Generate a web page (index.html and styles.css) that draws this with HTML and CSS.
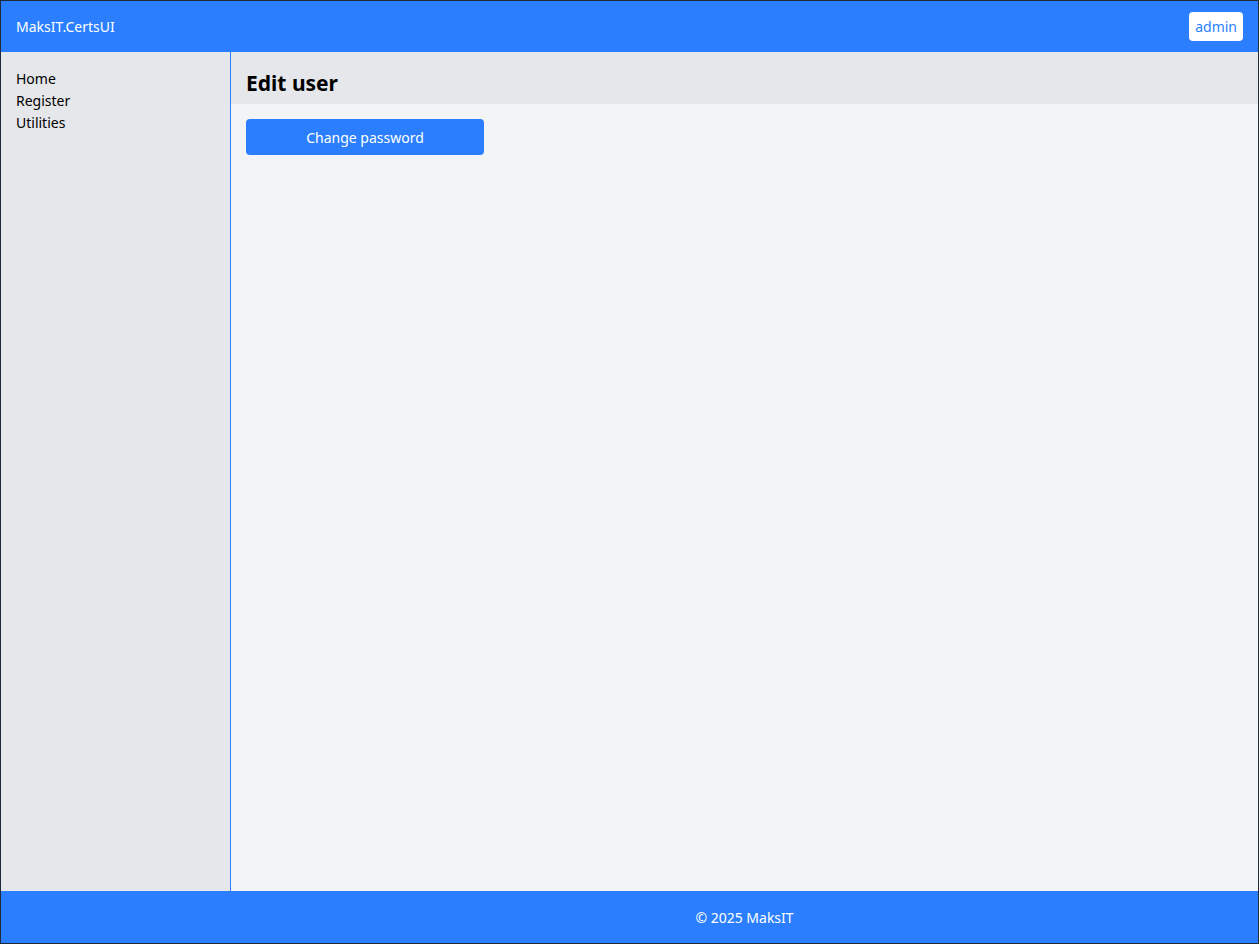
FILE: index.html
```html
<!DOCTYPE html>
<html>
  <head>
    <meta charset="utf-8">
    <title>MaksIT.CertsUI</title>
    <link rel="stylesheet" href="styles.css">
  </head>
  <body>
    <div class="app">
      <header class="topbar">
        <span class="brand">MaksIT.CertsUI</span>
        <button class="user-button">admin</button>
      </header>
      <div class="layout">
        <nav class="sidebar">
          <a href="#">Home</a>
          <a href="#">Register</a>
          <a href="#">Utilities</a>
        </nav>
        <main class="content">
          <div class="page-header">
            <h1>Edit user</h1>
          </div>
          <div class="page-body">
            <button class="button">Change password</button>
          </div>
        </main>
      </div>
      <footer class="footer">&copy; 2025 MaksIT</footer>
    </div>
  </body>
</html>
```

FILE: styles.css
```css
/* Base */
html, body {
  margin: 0;
  height: 100%;
}
body {
  font-family: "Noto Sans", "Open Sans", sans-serif;
  font-size: 14px;
  color: #000000;
}
.app {
  box-sizing: border-box;
  height: 100vh;
  border: 1px solid #1e2939;
  display: flex;
  flex-direction: column;
}
/* Top bar */
.topbar {
  height: 51px;
  flex-shrink: 0;
  background-color: #2b7fff;
  color: white;
  display: flex;
  align-items: center;
  justify-content: space-between;
  padding: 0 15px;
}
.user-button {
  font-family: inherit;
  font-size: 14px;
  background-color: white;
  color: #2b7fff;
  border: none;
  border-radius: 4px;
  height: 29px;
  padding: 0 6px;
  cursor: pointer;
}
/* Sidebar + content */
.layout {
  flex: 1;
  display: flex;
  min-height: 0;
}
.sidebar {
  width: 214px;
  flex-shrink: 0;
  background-color: #e5e7eb;
  border-right: 1px solid #2b7fff;
  padding: 16px 0 0 15px;
  display: flex;
  flex-direction: column;
}
.sidebar a {
  color: #000000;
  text-decoration: none;
  line-height: 22px;
}
.content {
  flex: 1;
  background-color: #f3f4f6;
  display: flex;
  flex-direction: column;
}
.page-header {
  background-color: #e5e7eb;
  height: 52px;
  box-sizing: border-box;
  display: flex;
  align-items: center;
  padding: 10px 15px 0;
}
.page-header h1 {
  margin: 0;
  font-size: 21px;
  font-weight: bold;
}
.page-body {
  padding: 15px;
}
.button {
  font-family: inherit;
  font-size: 14px;
  width: 238px;
  height: 36px;
  background-color: #2b7fff;
  color: white;
  border: none;
  border-radius: 4px;
  cursor: pointer;
}
/* Footer */
.footer {
  height: 52px;
  flex-shrink: 0;
  background-color: #2b7fff;
  color: white;
  display: flex;
  align-items: center;
  justify-content: center;
  padding-left: 230px;
}
```
